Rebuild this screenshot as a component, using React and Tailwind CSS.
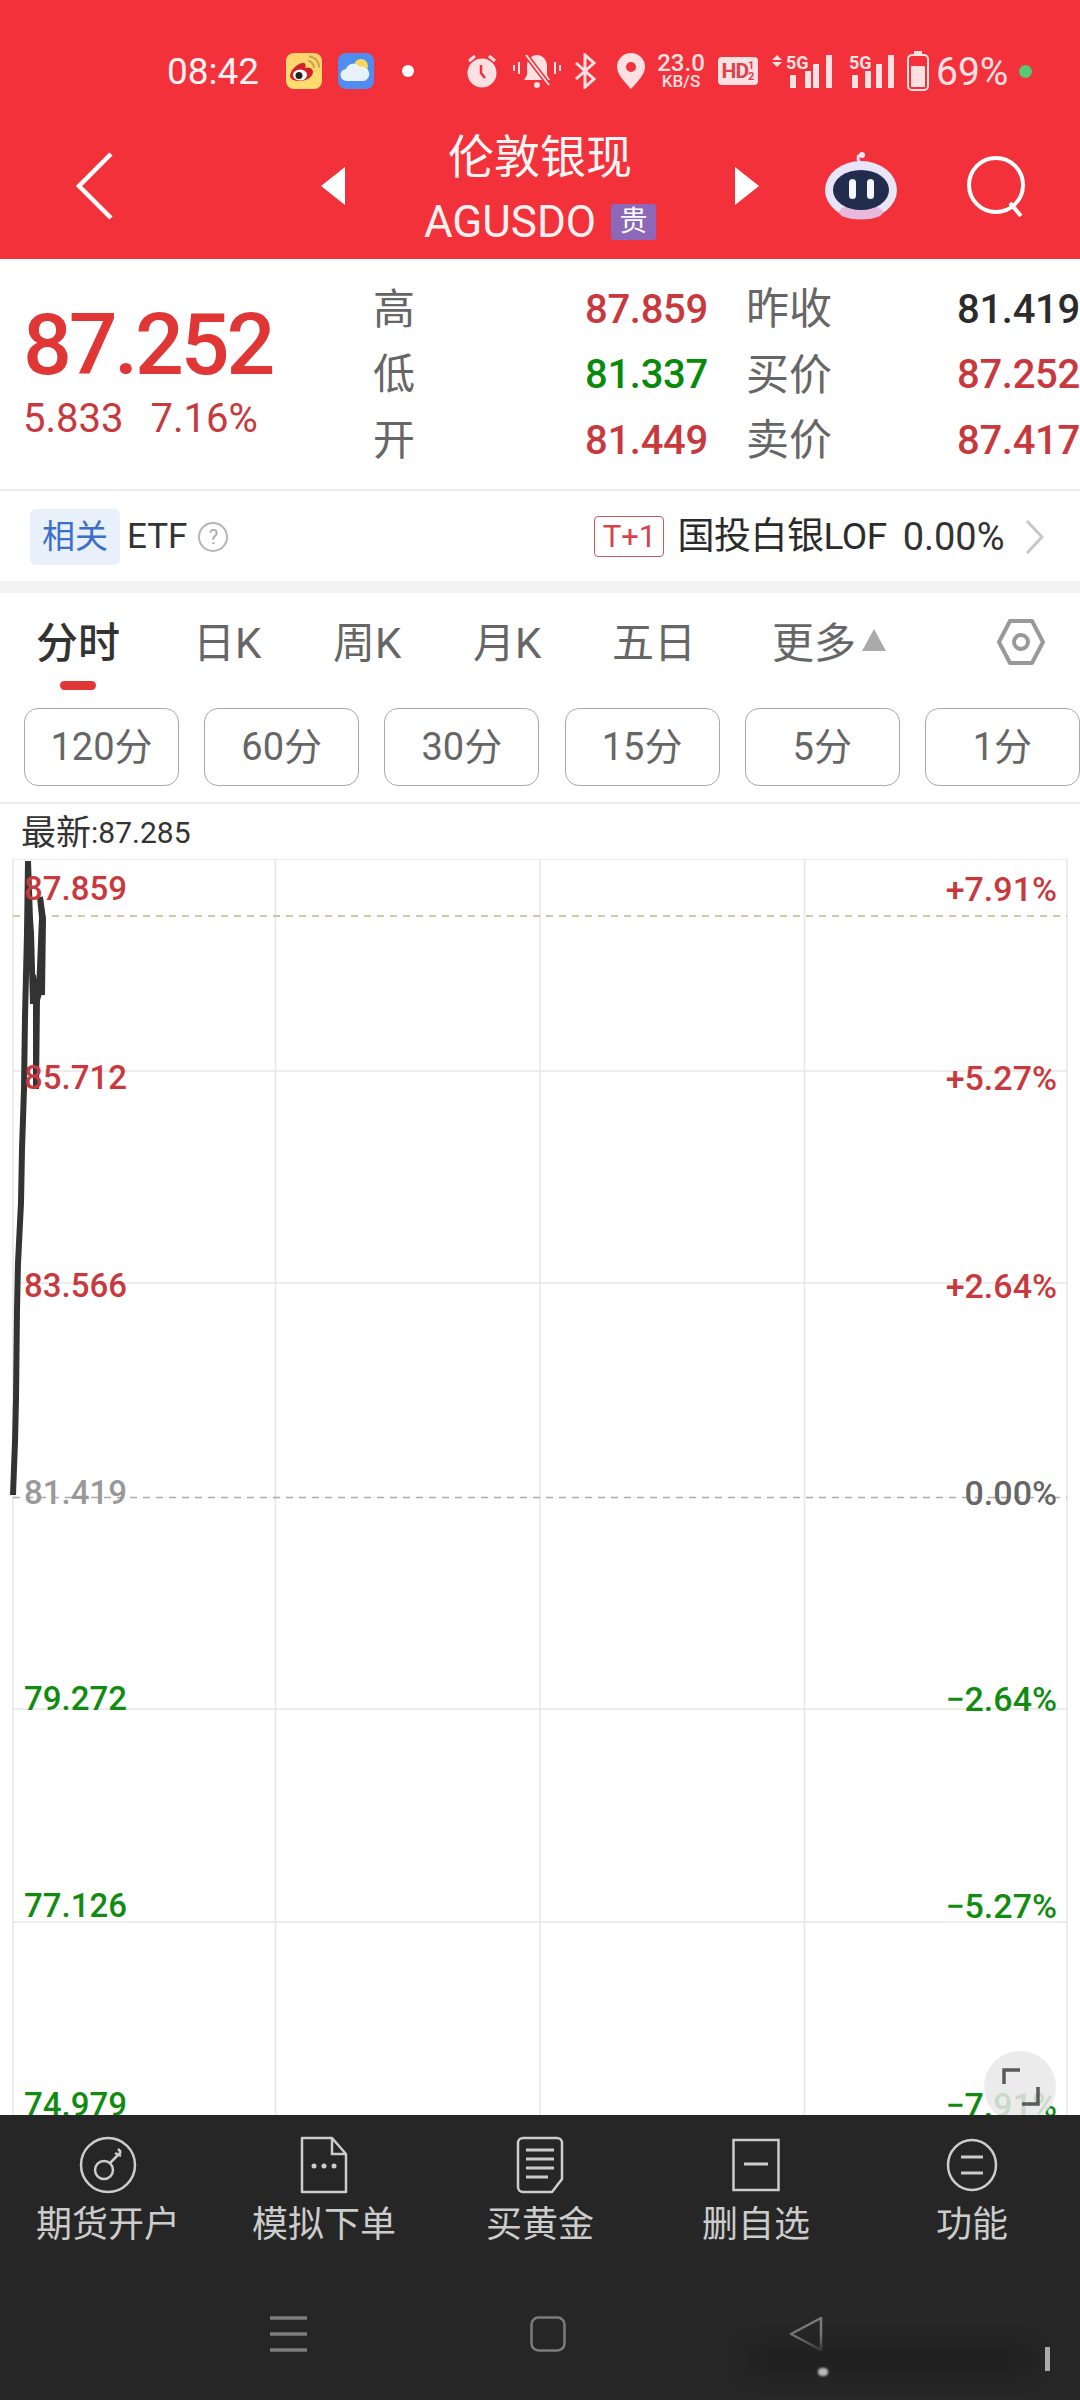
import React from 'react';

const chartLine = '13,1494 14,1467 15,1441 16,1398 17,1309 18,1262 21,1202 22,1148 24,1088 25,1016 26,974 27,932 28,860 30,918 31,932 33,1003 33,974 36,999 36,1088 37,999 39,992 42,916 40,896 43,918 42,994';

const chartLabels = [
  { price: '87.859', pct: '+7.91%', cls: 'top-[12px]', color: 'text-[#c8393d]' },
  { price: '85.712', pct: '+5.27%', cls: 'top-[201px]', color: 'text-[#c8393d]' },
  { price: '83.566', pct: '+2.64%', cls: 'top-[409px]', color: 'text-[#c8393d]' },
  { price: '81.419', pct: '0.00%', cls: 'top-[616px]', color: 'text-[#999999]' },
  { price: '79.272', pct: '−2.64%', cls: 'top-[822px]', color: 'text-[#118c11]' },
  { price: '77.126', pct: '−5.27%', cls: 'top-[1029px]', color: 'text-[#118c11]' },
  { price: '74.979', pct: '−7.91%', cls: 'top-[1228px]', color: 'text-[#118c11]' },
];

const quoteRows = [
  { label: '高', value: '87.859', color: 'text-[#c8393d]', label2: '昨收', value2: '81.419', color2: 'text-[#2b2b2b]' },
  { label: '低', value: '81.337', color: 'text-[#0a8a0a]', label2: '买价', value2: '87.252', color2: 'text-[#c8393d]' },
  { label: '开', value: '81.449', color: 'text-[#c8393d]', label2: '卖价', value2: '87.417', color2: 'text-[#c8393d]' },
];

const tabs = [
  { name: '日K', cls: 'w-[65px] ml-[73px]' },
  { name: '周K', cls: 'w-[69px] ml-[75px]' },
  { name: '月K', cls: 'w-[69px] ml-[71px]' },
  { name: '五日', cls: 'w-[84px] ml-[70px]' },
];

const periods = ['120分', '60分', '30分', '15分', '5分', '1分'];

function Weibo() {
  return (
    <svg width="36" height="36" viewBox="0 0 36 36" className="shrink-0">
      <defs>
        <linearGradient id="wb" x1="0" y1="0" x2="0" y2="1">
          <stop offset="0" stopColor="#fbd36f" />
          <stop offset="1" stopColor="#fdde6e" />
        </linearGradient>
      </defs>
      <rect width="36" height="36" rx="8" fill="url(#wb)" />
      <path d="M4 23c0-6 8-13 13-13 3 0 3 2 2 5 4-1 8 0 8 4 0 5-7 9-13 9-6 0-10-2-10-5z" fill="#d5202a" />
      <ellipse cx="14" cy="22" rx="7" ry="5.5" fill="#fff" />
      <circle cx="13" cy="22.5" r="3.5" fill="#222" />
      <path d="M22 8c3 0 6 3 6 7M23 3.500c6 0 10 5 10 11" stroke="#c9a24a" strokeWidth="2" fill="none" />
    </svg>
  );
}

function Weather() {
  return (
    <svg width="36" height="36" viewBox="0 0 36 36" className="ml-[16px] shrink-0">
      <rect width="36" height="36" rx="8" fill="#4f8df0" />
      <circle cx="23" cy="13" r="7" fill="#f7d65a" />
      <path d="M9 28a6 6 0 0 1-1-12 8 8 0 0 1 14-2 7 7 0 0 1 4 14z" fill="#e8f2fb" />
    </svg>
  );
}

function StatusIcons() {
  return (
    <>
      {/* alarm */}
      <svg width="34" height="34" viewBox="0 0 34 34" className="ml-[51px] shrink-0">
        <circle cx="17" cy="19" r="14.500" fill="#fde0e2" />
        <path d="M4 7l6-5M30 7l-6-5" stroke="#fde0e2" strokeWidth="3" />
        <path d="M16 11v8l4 5" stroke="#f2313b" strokeWidth="2.500" fill="none" />
      </svg>
      {/* muted bell */}
      <svg width="48" height="36" viewBox="0 0 48 36" className="ml-[14px] shrink-0">
        <path d="M24 2c-6 0-10 5-10 11v9l-3 5h26l-3-5v-9c0-6-4-11-10-11z" fill="#fde0e2" />
        <circle cx="24" cy="32" r="3" fill="#fde0e2" />
        <path d="M13 2l23 30" stroke="#f2313b" strokeWidth="5" />
        <path d="M13 2l23 30" stroke="#fde0e2" strokeWidth="2" />
        <path d="M1 12v6M6 9v12M42 9v12M47 12v6" stroke="#fde0e2" strokeWidth="2" />
      </svg>
      {/* bluetooth */}
      <svg width="22" height="36" viewBox="0 0 22 36" className="ml-[13px] shrink-0">
        <path d="M2 10l18 16-9 8V2l9 8L2 26" stroke="#fde0e2" strokeWidth="3" fill="none" />
      </svg>
      {/* location */}
      <svg width="28" height="36" viewBox="0 0 28 36" className="ml-[21px] shrink-0">
        <path fillRule="evenodd" d="M14 0a14 14 0 0 1 14 14c0 8-9 16-14 22C9 30 0 22 0 14A14 14 0 0 1 14 0zm0 9a5 5 0 1 0 0 10 5 5 0 0 0 0-10z" fill="#fde0e2" />
      </svg>
      <div className="ml-[11px] flex w-[50px] shrink-0 flex-col items-center text-[#fde0e2]">
        <span className="text-[24px] font-medium leading-[20px]">23.0</span>
        <span className="text-[17px] font-medium leading-[17px]">KB/S</span>
      </div>
      <div className="ml-[12px] flex h-[28px] w-[40px] shrink-0 items-center justify-center rounded-[4px] bg-[#fde0e2] text-[#d9434c]">
        <span className="text-[21px] font-bold leading-none tracking-[-1px]">HD</span>
        <span className="flex flex-col text-[11px] font-bold leading-[11px]"><span>1</span><span>2</span></span>
      </div>
      {/* signal with arrows */}
      <svg width="62" height="36" viewBox="0 0 62 36" className="ml-[14px] shrink-0">
        <path d="M5 2l5 5H0zM5 14l5-5H0z" fill="#fde0e2" />
        <text x="14" y="16" fontSize="18" fontWeight="700" fill="#fde0e2" fontFamily="Roboto">5G</text>
        <path d="M18 22h6v13h-6zM33 18h6v17h-6z" fill="#fde0e2" />
        <rect x="41" y="11" width="6" height="24" fill="#fde0e2" />
        <rect x="54" y="2" width="6" height="33" fill="#fde0e2" />
      </svg>
      <svg width="46" height="36" viewBox="0 0 46 36" className="ml-[15px] shrink-0">
        <text x="0" y="16" fontSize="18" fontWeight="700" fill="#fde0e2" fontFamily="Roboto">5G</text>
        <path d="M3 22h6v13H3zM16 18h6v17h-6z" fill="#fde0e2" />
        <rect x="27" y="11" width="6" height="24" fill="#fde0e2" />
        <rect x="39" y="2" width="6" height="33" fill="#fde0e2" />
      </svg>
      {/* battery */}
      <svg width="22" height="40" viewBox="0 0 22 40" className="ml-[12px] shrink-0">
        <rect x="7" y="0" width="8" height="3" fill="#fde0e2" />
        <rect x="1" y="4" width="20" height="35" rx="4" stroke="#fde0e2" strokeWidth="2" fill="none" />
        <rect x="4" y="15" width="14" height="21" rx="1" fill="#fde0e2" />
      </svg>
      <span className="ml-[7px] pt-[3px] text-[39px] leading-none text-[#fde0e2]">69%</span>
      <span className="ml-[11px] h-[13px] w-[13px] shrink-0 rounded-full bg-[#55c974]" />
    </>
  );
}

function Robot() {
  return (
    <svg width="74" height="68" viewBox="0 0 74 68" className="shrink-0">
      <path d="M37 12c-3-3-4-7-2-9" stroke="#e6e0f5" strokeWidth="3" fill="none" />
      <circle cx="38" cy="3" r="3" fill="#f0e8fa" />
      <ellipse cx="37" cy="38" rx="36" ry="29" fill="#e9e5f8" />
      <ellipse cx="37" cy="60" rx="22" ry="7.500" fill="#e7b9dc" />
      <ellipse cx="37" cy="38" rx="28" ry="20" fill="#222c4d" />
      <rect x="25" y="27" width="7" height="20" rx="3.500" fill="#f5f7fb" />
      <rect x="43" y="27" width="7" height="20" rx="3.500" fill="#f5f7fb" />
    </svg>
  );
}

function Header() {
  return (
    <header className="flex h-[259px] shrink-0 flex-col bg-[#f2313b] text-white">
      <div className="flex h-[91px] items-end pl-[167px]">
        <div className="flex h-[40px] items-center">
          <span className="w-[96px] shrink-0 text-[37px] leading-none text-[#fff2f2]">08:42</span>
          <span className="ml-[23px] flex"><Weibo /><Weather /></span>
          <span className="ml-[28px] h-[12px] w-[12px] shrink-0 rounded-full bg-white" />
          <StatusIcons />
        </div>
      </div>
      <div className="flex flex-1 items-center pt-[22px]">
        <svg width="40" height="70" viewBox="0 0 40 70" className="ml-[75px] shrink-0">
          <path d="M36 3L4 35l32 32" stroke="#fff" strokeWidth="4.500" fill="none" />
        </svg>
        <svg width="24" height="38" viewBox="0 0 24 38" className="ml-[206px] shrink-0"><path d="M24 0v38L0 19z" fill="#fff" /></svg>
        <div className="flex w-[390px] flex-col items-center">
          <span className="text-[46px] leading-[56px] text-[#fff5f5]">伦敦银现</span>
          <div className="mt-[15px] flex items-center">
            <span className="text-[44px] leading-[44px] text-[#fff0f0]">AGUSDO</span>
            <span className="ml-[15px] flex h-[36px] w-[45px] items-center justify-center rounded-[3px] bg-[#8d67b8] text-[28px] leading-none text-white">贵</span>
          </div>
        </div>
        <svg width="24" height="38" viewBox="0 0 24 38" className="shrink-0"><path d="M0 0v38L24 19z" fill="#fff" /></svg>
        <span className="ml-[65px] flex"><Robot /></span>
        <svg width="60" height="62" viewBox="0 0 60 62" className="ml-[68px] shrink-0">
          <circle cx="30" cy="30" r="27" stroke="#fff" strokeWidth="4" fill="none" />
          <path d="M44 48l11 13" stroke="#fff" strokeWidth="4" />
        </svg>
      </div>
    </header>
  );
}

function Quote() {
  return (
    <section className="flex h-[232px] shrink-0 border-b-2 border-[#ececec] bg-white">
      <div className="w-[373px] shrink-0 pl-[23px] pt-[50px]">
        <div className="text-[86px] font-medium leading-[72px] tracking-[-3.200px] text-[#e03636]">87.252</div>
        <div className="mt-[16px] flex text-[40px] leading-[44px] text-[#c8393d]">
          <span>5.833</span>
          <span className="ml-[27px]">7.16%</span>
        </div>
      </div>
      <div className="flex flex-1 flex-col pt-[18px]">
        {quoteRows.map((r) => (
          <div key={r.label} className="flex h-[65.500px] items-center">
            <span className="w-[212px] text-[42px] leading-none text-[#666666]">{r.label}</span>
            <span className={`w-[161px] text-[40px] font-medium leading-none tracking-[-0.300px] ${r.color}`}>{r.value}</span>
            <span className="w-[211px] text-[43px] leading-none text-[#666666]">{r.label2}</span>
            <span className={`text-[40px] font-medium leading-none tracking-[-0.300px] whitespace-nowrap ${r.color2}`}>{r.value2}</span>
          </div>
        ))}
      </div>
    </section>
  );
}

function EtfRow() {
  return (
    <section className="flex h-[90px] shrink-0 items-center bg-white pl-[30px] pt-[1px]">
      <span className="flex h-[56px] w-[90px] items-center justify-center rounded-[6px] bg-[#e8f0fb] text-[33px] leading-none text-[#3b6fc9]">相关</span>
      <span className="ml-[7px] text-[35px] leading-none text-[#333333]">ETF</span>
      <span className="ml-[11px] flex h-[30px] w-[30px] items-center justify-center rounded-full border-2 border-[#b5b5b5] text-[20px] leading-none text-[#aaaaaa]">?</span>
      <span className="ml-[366px] flex h-[41px] w-[70px] items-center justify-center rounded-[4px] border border-[#cc5a5a] text-[31px] leading-none text-[#d8434a]">T+1</span>
      <span className="ml-[13px] text-[37px] leading-none tracking-[-0.500px] text-[#2b2b2b]">国投白银LOF</span>
      <span className="ml-[16px] text-[38px] leading-none text-[#333333]">0.00%</span>
      <svg width="20" height="34" viewBox="0 0 20 34" className="ml-[20px] shrink-0">
        <path d="M2 1l15 16L2 33" stroke="#c8c8c8" strokeWidth="3" fill="none" />
      </svg>
    </section>
  );
}

function Tabs() {
  return (
    <section className="flex h-[111px] shrink-0 items-start bg-white pl-[36px] pt-[29px]">
      <div className="flex w-[84px] flex-col items-center">
        <span className="text-[42px] font-medium leading-[44px] text-[#333333]">分时</span>
        <span className="mt-[15px] h-[9px] w-[36px] rounded-full bg-[#e03636]" />
      </div>
      {tabs.map((t) => (
        <span key={t.name} className={`${t.cls} shrink-0 text-[42px] leading-[44px] whitespace-nowrap text-[#666666]`}>{t.name}</span>
      ))}
      <span className="ml-[76px] shrink-0 text-[42px] leading-[44px] text-[#666666]">更多</span>
      <svg width="24" height="22" viewBox="0 0 24 22" className="ml-[6px] mt-[7px] shrink-0"><path d="M12 0l12 22H0z" fill="#aaaaaa" /></svg>
      <svg width="48" height="46" viewBox="0 0 48 46" className="ml-[111px] shrink-0 -mt-[3px]">
        <path d="M13 2h22l11 21-11 21H13L2 23z" stroke="#999999" strokeWidth="4" fill="none" strokeLinejoin="round" />
        <circle cx="24" cy="23" r="7" stroke="#999999" strokeWidth="4" fill="none" />
      </svg>
    </section>
  );
}

function Periods() {
  return (
    <section className="flex h-[100px] shrink-0 gap-[25.200px] overflow-hidden border-b-2 border-[#ececec] bg-white pl-[24px] pt-[4px]">
      {periods.map((p) => (
        <span key={p} className="flex h-[78px] w-[155px] shrink-0 items-center justify-center rounded-[14px] border border-[#a8a8a8] text-[38px] leading-none text-[#666666]">{p}</span>
      ))}
    </section>
  );
}

function Chart() {
  return (
    <section className="relative flex-1 overflow-hidden bg-white">
      <svg viewBox="0 858 1080 1256" className="absolute inset-0 h-full w-full">
        <g stroke="#e6e6e6" strokeWidth="1.500" fill="none">
          <path d="M13 858h1054M13 1070h1054M13 1282h1054M13 1708h1054M13 1921h1054" />
          <path d="M13 858v1257M275.500 858v1257M540 858v1257M804.500 858v1257M1067 858v1257" />
        </g>
        <path d="M13 915h1054" stroke="#c9b48a" strokeWidth="1.500" strokeDasharray="7 6" />
        <path d="M13 1496.500h1054" stroke="#aaaaaa" strokeWidth="1.500" strokeDasharray="7 6" />
        <polyline points={chartLine} stroke="#333333" strokeWidth="6" fill="none" strokeLinejoin="miter" strokeMiterlimit="2" />
      </svg>
      {chartLabels.map((l) => (
        <React.Fragment key={l.price}>
          <span className={`absolute left-[24px] text-[33px] font-medium leading-[36px] ${l.cls} ${l.color}`}>{l.price}</span>
          <span className={`absolute right-[23px] text-[34px] font-medium leading-[36px] ${l.cls} ${l.price === '81.419' ? 'text-[#666666]' : l.color}`}>{l.pct}</span>
        </React.Fragment>
      ))}
      <div className="absolute left-[984px] top-[1192px] h-[72px] w-[72px] rounded-full bg-[#e8e8e8]/85">
        <svg width="72" height="72" viewBox="0 0 72 72">
          <path d="M20 33V19h16M54 36v17H38" stroke="#5a5a5a" strokeWidth="3.500" fill="none" />
        </svg>
      </div>
    </section>
  );
}

function BottomBar() {
  const stroke = '#cccccc';
  return (
    <footer className="relative h-[285px] shrink-0 bg-[#262626]">
      <div className="grid grid-cols-5 pt-[20px]">
        <div className="flex flex-col items-center">
          <svg width="58" height="60" viewBox="0 0 58 60">
            <ellipse cx="29" cy="30" rx="27" ry="27" stroke={stroke} strokeWidth="2.500" fill="none" />
            <circle cx="25" cy="35" r="9" stroke={stroke} strokeWidth="2.500" fill="none" />
            <path d="M31 28l11-11M36 18l6 3M39 14l3 3" stroke={stroke} strokeWidth="2.500" fill="none" />
          </svg>
          <span className="mt-[10px] text-[36px] leading-[40px] text-[#cccccc]">期货开户</span>
        </div>
        <div className="flex flex-col items-center">
          <svg width="50" height="60" viewBox="0 0 50 60">
            <path d="M3 3h30l14 16v38H3z" stroke={stroke} strokeWidth="2.500" fill="none" strokeLinejoin="round" />
            <path d="M33 3v16h14" stroke={stroke} strokeWidth="2.500" fill="none" />
            <circle cx="15" cy="31" r="2.500" fill={stroke} />
            <circle cx="25" cy="31" r="2.500" fill={stroke} />
            <circle cx="35" cy="31" r="2.500" fill={stroke} />
          </svg>
          <span className="mt-[10px] text-[36px] leading-[40px] text-[#cccccc]">模拟下单</span>
        </div>
        <div className="flex flex-col items-center">
          <svg width="50" height="60" viewBox="0 0 50 60">
            <path d="M8 3h34a5 5 0 0 1 5 5v36L37 57H8a5 5 0 0 1-5-5V8a5 5 0 0 1 5-5z" stroke={stroke} strokeWidth="2.500" fill="none" />
            <path d="M11 15h28M11 24h28M11 33h28M11 42h22" stroke={stroke} strokeWidth="3" />
          </svg>
          <span className="mt-[10px] text-[36px] leading-[40px] text-[#cccccc]">买黄金</span>
        </div>
        <div className="flex flex-col items-center">
          <svg width="50" height="60" viewBox="0 0 50 60">
            <rect x="2.500" y="5" width="45" height="50" stroke={stroke} strokeWidth="2.500" fill="none" />
            <path d="M13 29h24" stroke={stroke} strokeWidth="3" />
          </svg>
          <span className="mt-[10px] text-[36px] leading-[40px] text-[#cccccc]">删自选</span>
        </div>
        <div className="flex flex-col items-center">
          <svg width="52" height="60" viewBox="0 0 52 60">
            <ellipse cx="26" cy="30" rx="24" ry="25" stroke={stroke} strokeWidth="2.500" fill="none" />
            <path d="M15 22h22M15 38h22" stroke={stroke} strokeWidth="3" />
          </svg>
          <span className="mt-[10px] text-[36px] leading-[40px] text-[#cccccc]">功能</span>
        </div>
      </div>
      <div className="mt-[71px] flex items-start pl-[270px]">
        <svg width="38" height="36" viewBox="0 0 38 36"><path d="M0 2h37M0 18h37M0 34h37" stroke="#7c7c7c" strokeWidth="3.500" /></svg>
        <svg width="36" height="36" viewBox="0 0 36 36" className="ml-[222px]"><rect x="1.500" y="1.500" width="33" height="33" rx="7" stroke="#7c7c7c" strokeWidth="2.500" fill="none" /></svg>
        <svg width="36" height="36" viewBox="0 0 36 36" className="ml-[222px]"><path d="M33 2v32L3 18z" stroke="#7c7c7c" strokeWidth="2.500" fill="none" strokeLinejoin="round" /></svg>
      </div>
      {/* smudged watermark */}
      <div className="absolute left-[745px] top-[230px] h-[30px] w-[290px] rounded-full bg-[#212121] blur-sm" />
      <span className="absolute left-[818px] top-[253px] h-[8px] w-[10px] rounded-full bg-[#bbbbbb] blur-[1px]" />
      <span className="absolute left-[1045px] top-[232px] h-[24px] w-[5px] bg-[#aaaaaa]" />
    </footer>
  );
}

export default function App() {
  return (
    <div className="flex h-[2400px] w-[1080px] flex-col overflow-hidden bg-white font-['Roboto','Noto_Sans_CJK_SC',sans-serif]">
      <Header />
      <Quote />
      <EtfRow />
      <div className="h-[12px] shrink-0 bg-[#f4f4f4]" />
      <Tabs />
      <Periods />
      <div className="flex h-[55px] shrink-0 items-center bg-white pl-[21px] pt-[3px] leading-none text-[#333333]">
        <span className="text-[35px]">最新</span>
        <span className="text-[30px]">:87.285</span>
      </div>
      <Chart />
      <BottomBar />
    </div>
  );
}
